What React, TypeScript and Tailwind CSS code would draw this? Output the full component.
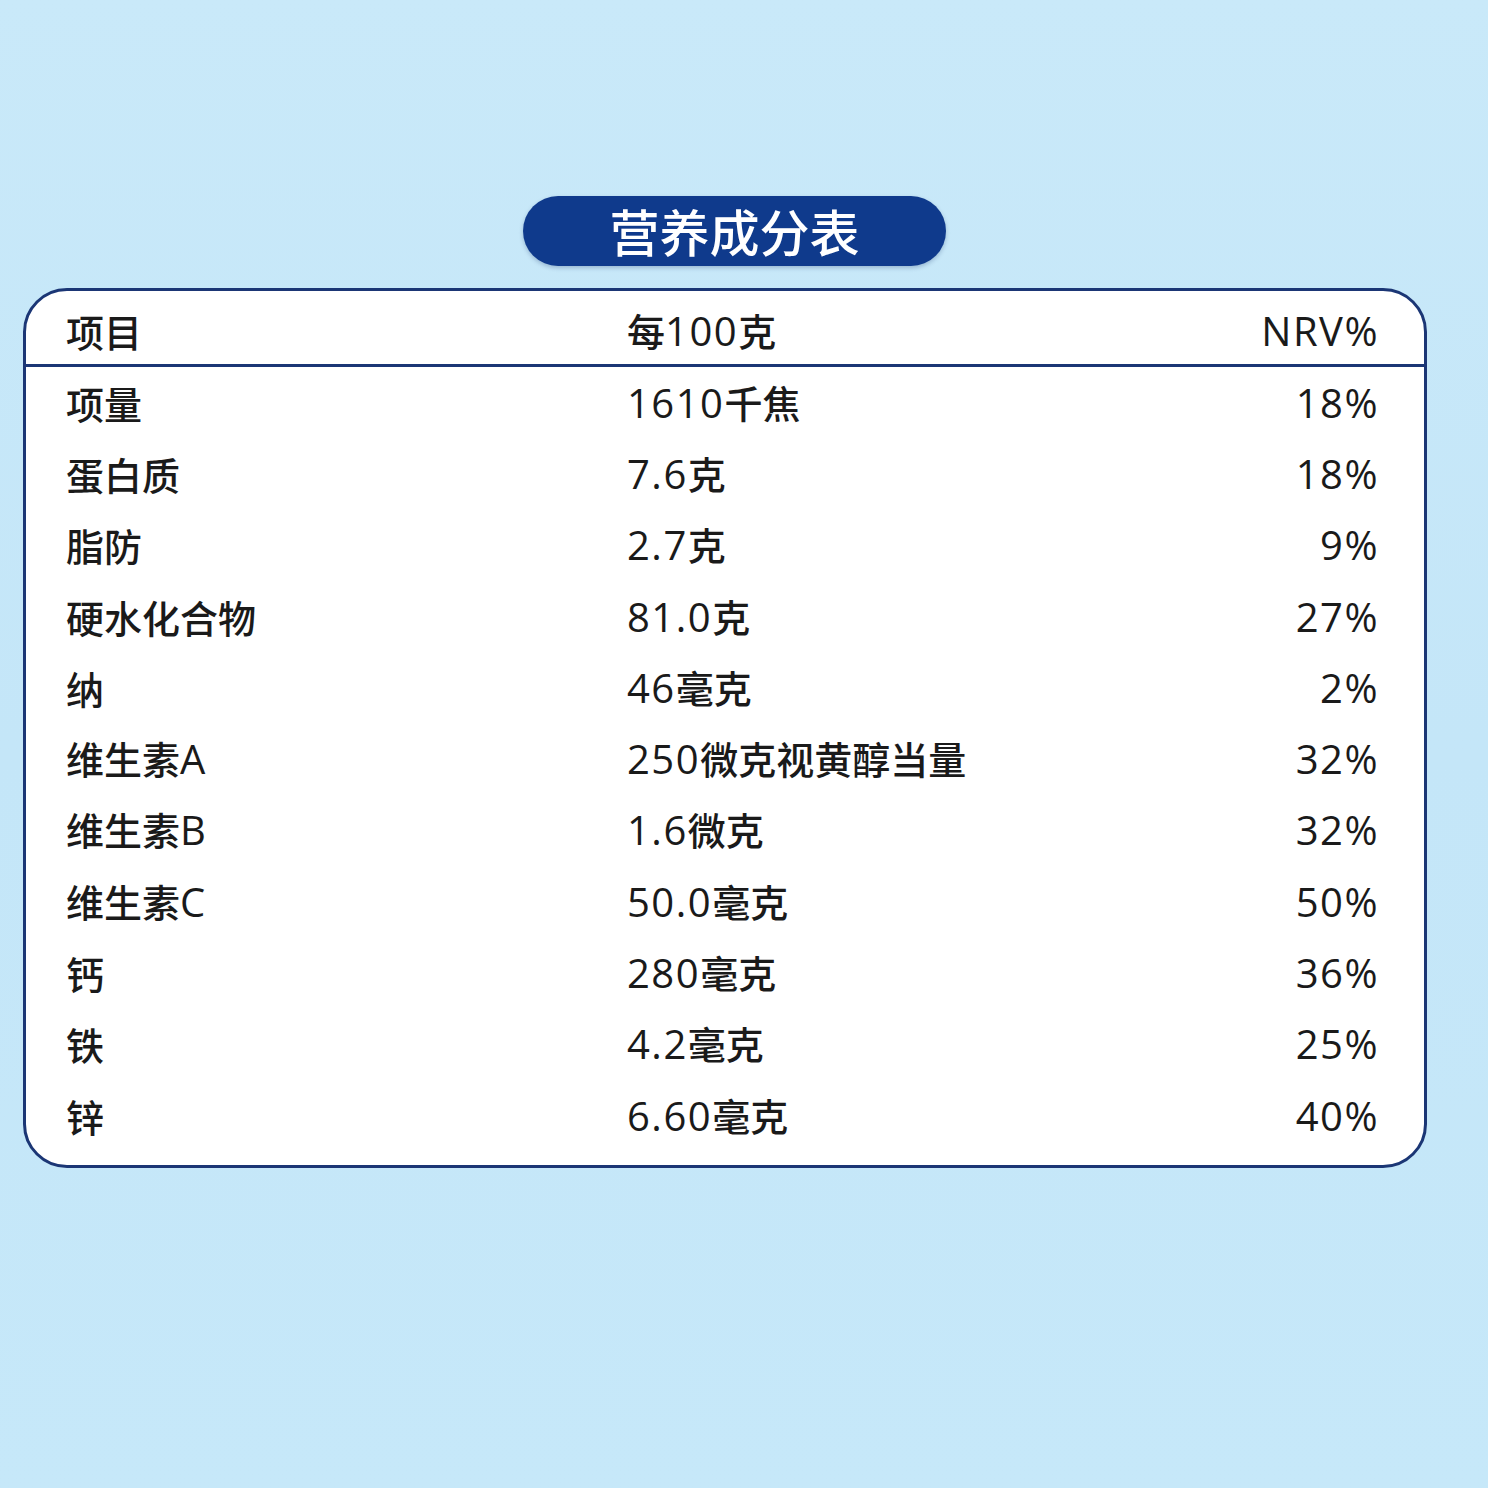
const rows: [string, string, string][] = [
  ["项量", "1610千焦", "18%"],
  ["蛋白质", "7.6克", "18%"],
  ["脂防", "2.7克", "9%"],
  ["硬水化合物", "81.0克", "27%"],
  ["纳", "46毫克", "2%"],
  ["维生素A", "250微克视黄醇当量", "32%"],
  ["维生素B", "1.6微克", "32%"],
  ["维生素C", "50.0毫克", "50%"],
  ["钙", "280毫克", "36%"],
  ["铁", "4.2毫克", "25%"],
  ["锌", "6.60毫克", "40%"],
];

const cjk = { fontFamily: '"Noto Sans CJK SC", "Noto Sans", sans-serif' };
const latin = { fontFamily: '"Open Sans", "Noto Sans CJK SC", sans-serif' };

// latin letters and digits get a slightly larger, wider face
const Mixed = ({ text }: { text: string }) => (
  <>
    {text.split(/([A-Za-z0-9.%]+)/).map((part, i) =>
      /[A-Za-z0-9.%]/.test(part) ? (
        <span key={i} style={latin} className="text-[40px] font-medium tracking-[1.5px]">
          {part}
        </span>
      ) : (
        <span key={i}>{part}</span>
      )
    )}
  </>
);

export default function App() {
  return (
    <div
      className="w-[1488px] h-[1488px] bg-gradient-to-b from-[#c9e9f9] via-[#c4e6f8] to-[#c6e8f9] flex flex-col items-start pt-[196px]"
      style={cjk}
    >
      <div className="ml-[523px] w-[423px] h-[70px] rounded-full bg-[#0f3a8c] flex items-center justify-center shadow-[0_2px_4px_rgba(10,40,100,0.25)]">
        <span className="text-white text-[50px] leading-none font-medium pb-[2px]">营养成分表</span>
      </div>

      <div className="ml-[23px] mt-[22px] w-[1404px] bg-white border-[3px] border-[#1b3675] rounded-[44px] pb-[14px] text-[#1a1a1a] font-medium">
        <div className="grid grid-cols-[561px_1fr_auto] items-center h-[76px] pl-[40px] pr-[45px] pt-[6px] border-b-[3px] border-[#1b3675] text-[38px] leading-none">
          <span>项目</span>
          <span>
            <Mixed text="每100克" />
          </span>
          <span>
            <Mixed text="NRV%" />
          </span>
        </div>
        <div className="pl-[40px] pr-[45px]">
          {rows.map(([name, amount, nrv]) => (
            <div
              key={name}
              className="grid grid-cols-[561px_1fr_auto] items-center h-[71.3px] text-[38px] leading-none"
            >
              <span>
                <Mixed text={name} />
              </span>
              <span>
                <Mixed text={amount} />
              </span>
              <span className="text-right">
                <Mixed text={nrv} />
              </span>
            </div>
          ))}
        </div>
      </div>
    </div>
  );
}
